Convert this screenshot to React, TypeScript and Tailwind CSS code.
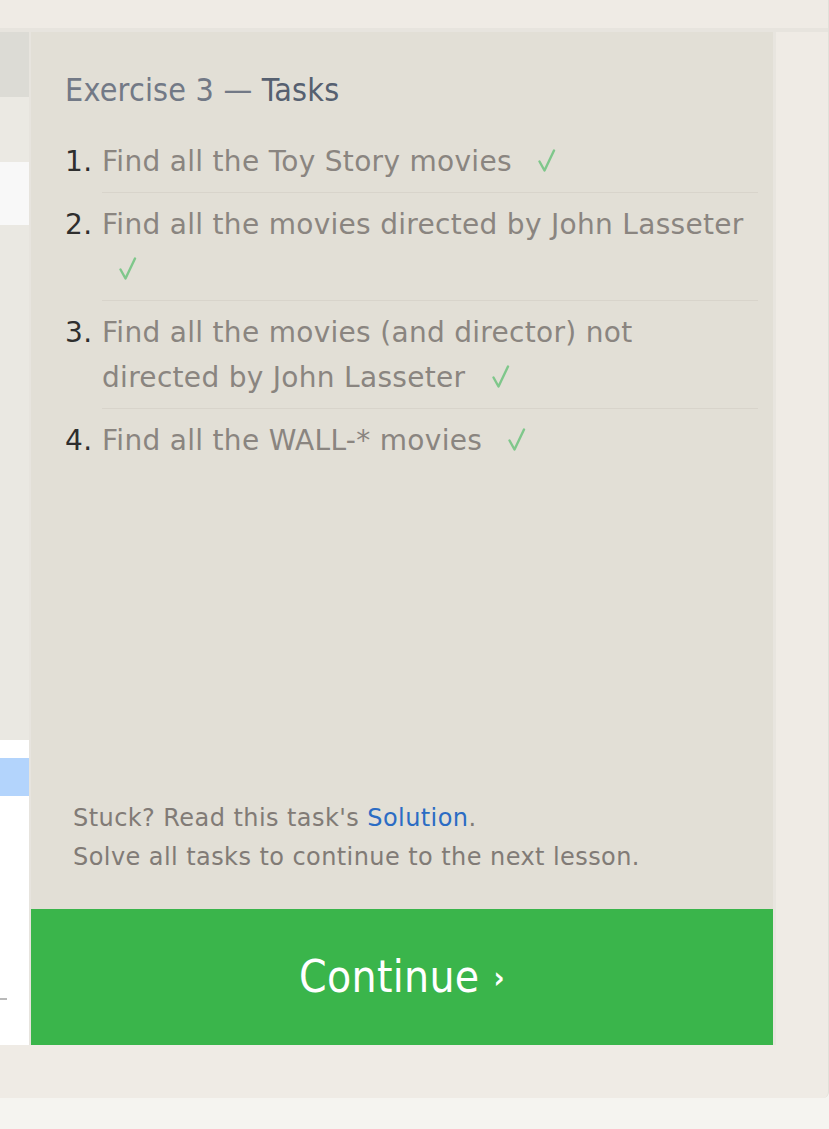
function Check() {
  return (
    <svg width="20" height="24" viewBox="0 0 20 24" className="inline-block align-[-2px]" aria-hidden="true">
      <path d="M2.5 12.5 L7.5 21.5 L17 1.5" fill="none" stroke="#7fc78b" strokeWidth="2.4" strokeLinecap="round" strokeLinejoin="round" />
    </svg>
  );
}

const tasks = [
  "Find all the Toy Story movies",
  "Find all the movies directed by John Lasseter",
  "Find all the movies (and director) not directed by John Lasseter",
  "Find all the WALL-* movies",
];

export default function App() {
  return (
    <div className="min-h-[1129px] w-full bg-[#f5f4f0] font-['DejaVu_Sans',sans-serif]">
      <div className="flex h-[1098px] w-[829px] flex-col rounded-br-[6px] border-r border-[#e2dfd8] bg-[#efebe5] pt-[28px]">
        <div className="flex border-t-4 border-[#e7e4de]">
          {/* left editor column */}
          <div className="flex w-[29px] flex-col">
            <div className="h-[65px] bg-[#dcdbd5]" />
            <div className="h-[65px] bg-[#ebe9e3]" />
            <div className="h-[63px] bg-[#f8f8f8]" />
            <div className="h-[515px] bg-[#eae8e2]" />
            <div className="flex h-[305px] flex-col bg-white">
              <div className="mt-[18px] h-[38px] bg-[#b3d4fc]" />
              <div className="mt-[202px] h-[2px] w-[7px] bg-[#b9b9b9]" />
            </div>
          </div>
          <div className="w-[2px] bg-[#e7e4de]" />
          {/* tasks panel */}
          <div className="flex h-[1013px] w-[745px] flex-col border-r-[3px] border-[#e8e5df] bg-[#e2dfd6]">
            <div className="pl-[34px] pr-[15px] pt-[38px]">
              <h2 className="font-['DejaVu_Sans_Condensed',sans-serif] text-[32px] leading-[40px] tracking-[0.2px] text-[#727986]">
                Exercise 3 — <span className="text-[#566070]">Tasks</span>
              </h2>
              <ol className="mt-[20px]">
                {tasks.map((t, i) => (
                  <li key={i} className="flex text-[28px] leading-[45px] tracking-[0.3px]">
                    <span className="w-[37px] shrink-0 pt-[9px] text-[#2e2e2e]">{i + 1}.</span>
                    <div
                      className={
                        "flex-1 pb-[8px] pt-[9px] text-[#8a8580] " +
                        (i < tasks.length - 1 ? "border-b border-[#d8d4cb]" : "")
                      }
                    >
                      {t} <span className="ml-[16px]"><Check /></span>
                    </div>
                  </li>
                ))}
              </ol>
            </div>
            <div className="mt-auto pb-[32px] pl-[42px] text-[24px] leading-[39px] tracking-[0.43px] text-[#817b76]">
              <p>
                Stuck? Read this task's <span className="text-[#2b6cc4]">Solution</span>.
              </p>
              <p>Solve all tasks to continue to the next lesson.</p>
            </div>
            <div className="flex h-[136px] items-center justify-center bg-[#3ab54b] font-['DejaVu_Sans_Condensed',sans-serif] text-[44px] tracking-[0.3px] text-white">
              <span>Continue</span>
              <span className="ml-[14px] text-[30px] font-bold">›</span>
            </div>
          </div>
        </div>
      </div>
    </div>
  );
}
